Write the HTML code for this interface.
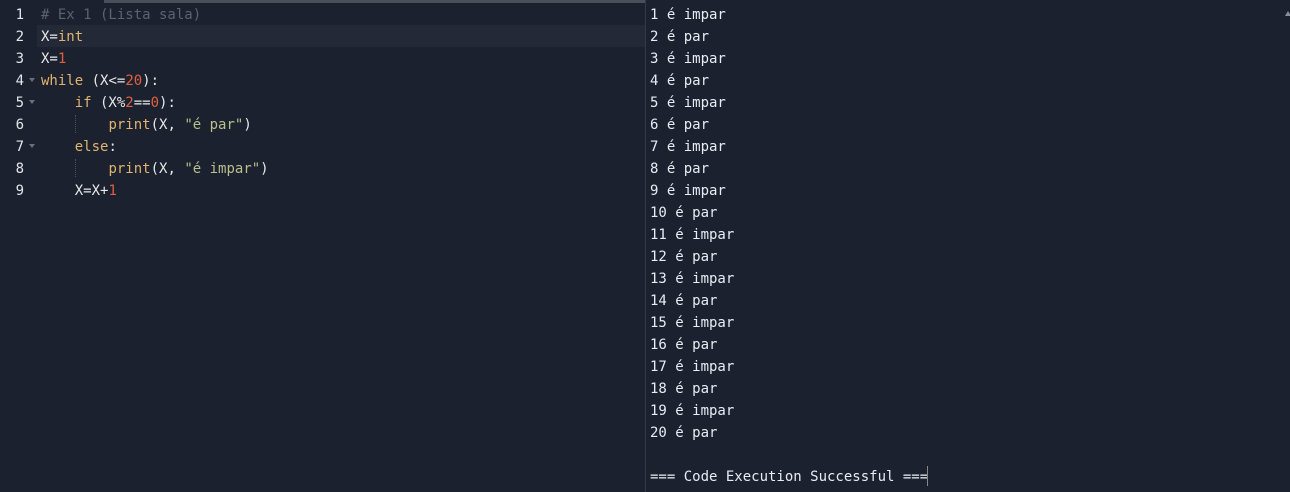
<!DOCTYPE html>
<html><head><meta charset="utf-8"><style>
html,body{margin:0;padding:0;width:1290px;height:492px;overflow:hidden;background:#1c2130;}
body{position:relative;font-family:"DejaVu Sans Mono","Liberation Mono",monospace;font-size:14px;}
.top{position:absolute;left:104px;top:0;width:542px;height:3px;background:#4a4e58;}
.div{position:absolute;left:645px;top:0;width:1px;height:492px;background:#353a47;}
.hl{position:absolute;left:37px;top:25px;width:608px;height:22px;background:#242937;}
.ln{position:absolute;left:0;width:24px;text-align:right;color:#e4e6ea;line-height:22px;}
.code{position:absolute;left:41px;top:4px;line-height:22px;color:#e8e8e8;white-space:pre;}
.c{color:#5c6270}.k{color:#e0b46e}.n{color:#e0603c}.s{color:#b8bf8a}.f{color:#e0b46e}
.fold{position:absolute;left:29px;width:0;height:0;border-left:3px solid transparent;border-right:3px solid transparent;border-top:4px solid #6a6f7a;}
.guide{position:absolute;left:75px;width:0;height:18px;border-left:1px dotted #4a4f5c;}
.out{position:absolute;left:650px;top:4px;line-height:22px;color:#e8ecf2;white-space:pre;}
.cur{position:absolute;left:927px;top:466px;width:1px;height:20px;background:#888;}
.sb{position:absolute;left:1285px;top:11px;width:0;height:0;border-left:3px solid transparent;border-right:3px solid transparent;border-bottom:5px solid #8a8f99;}
</style></head><body>
<div class="top"></div>
<div class="hl"></div>
<div class="div"></div>
<div class="ln" style="top:4px">1</div>
<div class="ln" style="top:26px">2</div>
<div class="ln" style="top:48px">3</div>
<div class="ln" style="top:70px">4</div>
<div class="ln" style="top:92px">5</div>
<div class="ln" style="top:114px">6</div>
<div class="ln" style="top:136px">7</div>
<div class="ln" style="top:158px">8</div>
<div class="ln" style="top:180px">9</div>
<div class="fold" style="top:78px"></div>
<div class="fold" style="top:100px"></div>
<div class="fold" style="top:144px"></div>
<div class="guide" style="top:115px"></div>
<div class="guide" style="top:159px"></div>
<div class="code"><span class="c"># Ex 1 (Lista sala)</span>
X=<span class="k">int</span>
X=<span class="n">1</span>
<span class="k">while</span> (X&lt;=<span class="n">20</span>):
    <span class="k">if</span> (X%<span class="n">2</span>==<span class="n">0</span>):
        <span class="f">print</span>(X, <span class="s">"é par"</span>)
    <span class="k">else</span>:
        <span class="f">print</span>(X, <span class="s">"é impar"</span>)
    X=X+<span class="n">1</span></div>
<div class="out">1 é impar
2 é par
3 é impar
4 é par
5 é impar
6 é par
7 é impar
8 é par
9 é impar
10 é par
11 é impar
12 é par
13 é impar
14 é par
15 é impar
16 é par
17 é impar
18 é par
19 é impar
20 é par

=== Code Execution Successful ===</div>
<div class="cur"></div>
<div class="sb"></div>
</body></html>
